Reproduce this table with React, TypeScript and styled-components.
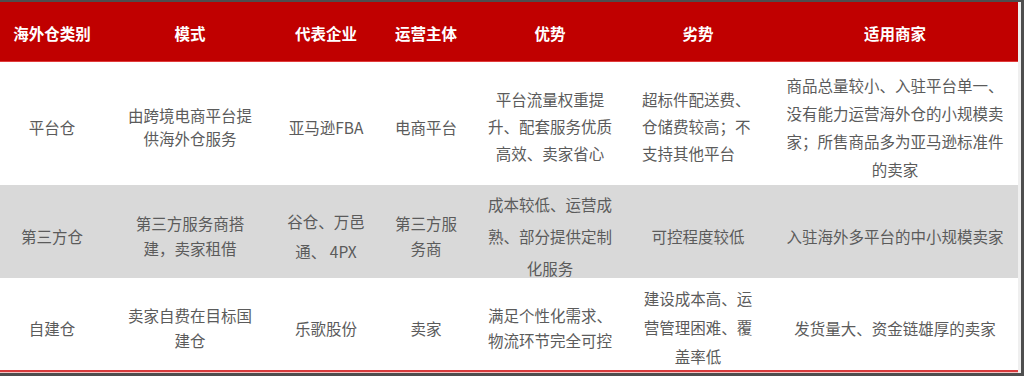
import React from "react";
import styled, { createGlobalStyle } from "styled-components";

const Global = createGlobalStyle`
  html, body { margin: 0; padding: 0; background: #4e4e4e; }
  body { width: 1024px; height: 376px; overflow: hidden; }
`;

const Frame = styled.div`
  margin-top: 2px;
  width: 1018px;
  border-right: 3px solid #efefef;
  background: #ffffff;
  font-family: "Noto Sans CJK SC", "Noto Sans", sans-serif;
`;

const COLS = "104px 172px 100px 100px 148px 148px 246px";

const HeaderRow = styled.div`
  display: grid;
  grid-template-columns: ${COLS};
  height: 59px;
  background: #c00000;
  border-bottom: 1px solid #e03a3a;
`;

const HeaderCell = styled.div`
  display: flex;
  align-items: center;
  justify-content: center;
  padding-top: 2px;
  color: #ffffff;
  font-weight: 700;
  font-size: 15.5px;
  white-space: nowrap;
`;

const Row = styled.div<{ $bg: string; $h: number; $pt: number }>`
  display: grid;
  grid-template-columns: ${COLS};
  height: ${(p) => p.$h}px;
  background: ${(p) => p.$bg};
  padding-top: ${(p) => p.$pt}px;
  box-sizing: border-box;
`;

const Cell = styled.div<{ $lh: number; $align: "center" | "left"; $pl: number }>`
  display: flex;
  flex-direction: column;
  justify-content: center;
  align-items: ${(p) => (p.$align === "left" ? "flex-start" : "center")};
  padding-left: ${(p) => p.$pl}px;
  color: #5b5b5b;
  font-size: 15.5px;
  line-height: ${(p) => p.$lh}px;
  white-space: nowrap;
`;

const Line = styled.span`
  display: block;
`;

const BottomRule = styled.div`
  height: 2px;
  background: #d83a3c;
  border-bottom: 1px solid #f3c4c4;
`;

type CellData = { lines: string[]; lh?: number; align?: "center" | "left"; pl?: number };
type RowData = { bg: string; h: number; pt: number; cells: CellData[] };

const headers = ["海外仓类别", "模式", "代表企业", "运营主体", "优势", "劣势", "适用商家"];

const rows: RowData[] = [
  {
    bg: "#ffffff",
    h: 123,
    pt: 6,
    cells: [
      { lines: ["平台仓"] },
      { lines: ["由跨境电商平台提", "供海外仓服务"], lh: 23 },
      { lines: ["亚马逊FBA"] },
      { lines: ["电商平台"] },
      { lines: ["平台流量权重提", "升、配套服务优质", "高效、卖家省心"], lh: 27 },
      { lines: ["超标件配送费、", "仓储费较高；不", "支持其他平台"], lh: 27, align: "left", pl: 18 },
      {
        lines: [
          "商品总量较小、入驻平台单一、",
          "没有能力运营海外仓的小规模卖",
          "家；所售商品多为亚马逊标准件",
          "的卖家",
        ],
        lh: 28,
      },
    ],
  },
  {
    bg: "#d9d9d9",
    h: 93,
    pt: 3,
    cells: [
      { lines: ["第三方仓"] },
      { lines: ["第三方服务商搭", "建，卖家租借"], lh: 25 },
      { lines: ["谷仓、万邑", "通、 4PX"], lh: 30 },
      { lines: ["第三方服", "务商"], lh: 25 },
      { lines: ["成本较低、运营成", "熟、部分提供定制", "化服务"], lh: 32 },
      { lines: ["可控程度较低"] },
      { lines: ["入驻海外多平台的中小规模卖家"] },
    ],
  },
  {
    bg: "#ffffff",
    h: 92,
    pt: 6,
    cells: [
      { lines: ["自建仓"] },
      { lines: ["卖家自费在目标国", "建仓"], lh: 25 },
      { lines: ["乐歌股份"] },
      { lines: ["卖家"] },
      { lines: ["满足个性化需求、", "物流环节完全可控"], lh: 25 },
      { lines: ["建设成本高、运", "营管理困难、覆", "盖率低"], lh: 29 },
      { lines: ["发货量大、资金链雄厚的卖家"] },
    ],
  },
];

export default function App() {
  return (
    <>
      <Global />
      <Frame>
        <HeaderRow>
          {headers.map((h) => (
            <HeaderCell key={h}>{h}</HeaderCell>
          ))}
        </HeaderRow>
        {rows.map((r, i) => (
          <Row key={i} $bg={r.bg} $h={r.h} $pt={r.pt}>
            {r.cells.map((c, j) => (
              <Cell key={j} $lh={c.lh ?? 24} $align={c.align ?? "center"} $pl={c.pl ?? 0}>
                {c.lines.map((l, k) => (
                  <Line key={k}>{l}</Line>
                ))}
              </Cell>
            ))}
          </Row>
        ))}
        <BottomRule />
      </Frame>
    </>
  );
}
